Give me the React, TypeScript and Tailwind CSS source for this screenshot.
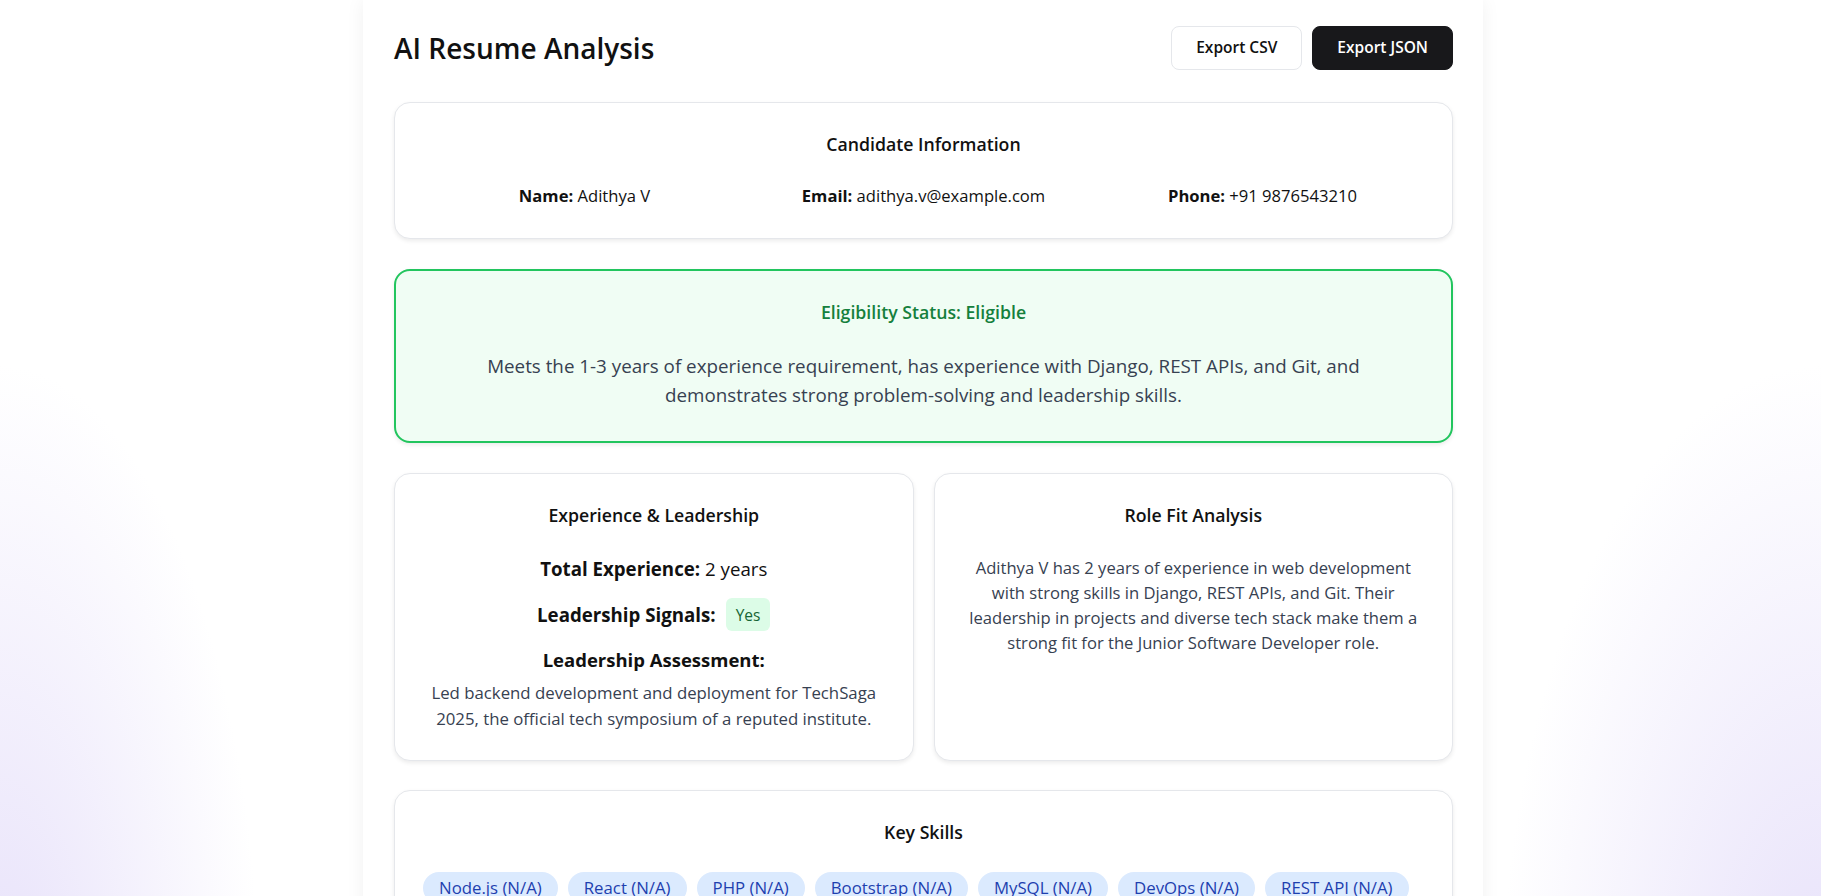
import React from "react";

const skills = [
  "Node.js (N/A)",
  "React (N/A)",
  "PHP (N/A)",
  "Bootstrap (N/A)",
  "MySQL (N/A)",
  "DevOps (N/A)",
  "REST API (N/A)",
  "Django (N/A)",
  "Git (N/A)",
  "JavaScript (N/A)",
  "HTML (N/A)",
  "CSS (N/A)",
];

function Card({ children, className = "" }: { children: React.ReactNode; className?: string }) {
  return (
    <div
      className={
        "rounded-2xl border border-[#e5e7eb] bg-white pt-[27px] shadow-[0_2px_4px_rgba(0,0,0,0.08)] " + className
      }
    >
      {children}
    </div>
  );
}

function CardTitle({ children, className = "" }: { children: React.ReactNode; className?: string }) {
  return (
    <h2 className={"mb-[26px] text-center text-[17.7px] leading-7 font-semibold text-[#111111] " + className}>
      {children}
    </h2>
  );
}

export default function App() {
  return (
    <div className="min-h-screen w-full bg-white bg-[radial-gradient(ellipse_260px_650px_at_0%_100%,#e7e1fa_0%,rgba(255,255,255,0)_100%),radial-gradient(ellipse_320px_650px_at_100%_100%,#e7e1fa_0%,rgba(255,255,255,0)_100%)] pl-[25px] [font-family:'Open_Sans',Lato,sans-serif] text-[#111111]">
      <div className="mx-auto min-h-screen w-[1120px] bg-white pt-[26px] pr-[30px] pb-10 pl-[31px] shadow-[0_0_18px_rgba(0,0,0,0.06)]">
        {/* Header */}
        <div className="mb-8 flex h-11 items-center justify-between">
          <h1 className="text-[28px] leading-9 font-semibold text-[#111111]">AI Resume Analysis</h1>
          <div className="flex items-center gap-2.5">
            <button className="h-11 rounded-lg border border-[#e5e7eb] bg-white px-6 text-[15.5px] font-semibold text-[#111111]">
              Export CSV
            </button>
            <button className="h-11 rounded-lg border border-[#18181b] bg-[#18181b] px-6 text-[15.5px] font-semibold text-white">
              Export JSON
            </button>
          </div>
        </div>

        <div className="flex flex-col gap-[30px]">
          {/* Candidate Information */}
          <Card className="px-5 pb-[30px]">
            <CardTitle>Candidate Information</CardTitle>
            <div className="grid grid-cols-3 text-center text-[16.6px] leading-6 text-[#111111]">
              <div>
                <span className="font-bold">Name:</span> Adithya V
              </div>
              <div>
                <span className="font-bold">Email:</span> adithya.v@example.com
              </div>
              <div>
                <span className="font-bold">Phone:</span> +91 9876543210
              </div>
            </div>
          </Card>

          {/* Eligibility */}
          <div className="rounded-2xl border-2 border-[#22c55e] bg-[#f0fdf4] px-7 pt-[27px] pb-[31px] shadow-[0_2px_4px_rgba(0,0,0,0.08)]">
            <h2 className="mb-[26px] text-center text-[17.7px] leading-7 font-semibold text-[#15803d]">
              Eligibility Status: Eligible
            </h2>
            <p className="mx-auto max-w-[896px] text-center text-[18.8px] leading-[29px] text-[#374151]">
              Meets the 1-3 years of experience requirement, has experience with Django, REST APIs, and Git, and
              demonstrates strong problem-solving and leadership skills.
            </p>
          </div>

          {/* Two columns */}
          <div className="grid grid-cols-2 gap-5">
            <Card className="px-7 pb-[28px]">
              <CardTitle>Experience &amp; Leadership</CardTitle>
              <div className="flex flex-col items-center text-center">
                <p className="mb-[15px] text-[18.7px] leading-7">
                  <span className="font-bold">Total Experience:</span> 2 years
                </p>
                <div className="mb-[15px] flex items-center justify-center gap-2.5">
                  <span className="text-[18.7px] leading-7 font-bold">Leadership Signals:</span>
                  <span className="rounded-md bg-[#dcfce7] px-2.5 py-[4.5px] text-[15.5px] leading-6 text-[#166534]">
                    Yes
                  </span>
                </div>
                <p className="mb-[6px] text-[18.5px] leading-7 font-bold">Leadership Assessment:</p>
                <p className="text-[16.8px] leading-[26px] text-[#374151]">
                  Led backend development and deployment for TechSaga 2025, the official tech symposium of a reputed
                  institute.
                </p>
              </div>
            </Card>
            <Card className="px-7 pb-[28px]">
              <CardTitle>Role Fit Analysis</CardTitle>
              <p className="text-center text-[16.6px] leading-[25px] text-[#374151]">
                Adithya V has 2 years of experience in web development with strong skills in Django, REST APIs, and
                Git. Their leadership in projects and diverse tech stack make them a strong fit for the Junior
                Software Developer role.
              </p>
            </Card>
          </div>

          {/* Key Skills */}
          <Card className="-mt-px px-7 pb-7">
            <CardTitle>Key Skills</CardTitle>
            <div className="flex flex-wrap gap-2.5">
              {skills.map((s) => (
                <span
                  key={s}
                  className="rounded-full bg-[#dbeafe] px-4 py-1 text-[16.8px] leading-6 text-[#1e40af]"
                >
                  {s}
                </span>
              ))}
            </div>
          </Card>
        </div>
      </div>
    </div>
  );
}
